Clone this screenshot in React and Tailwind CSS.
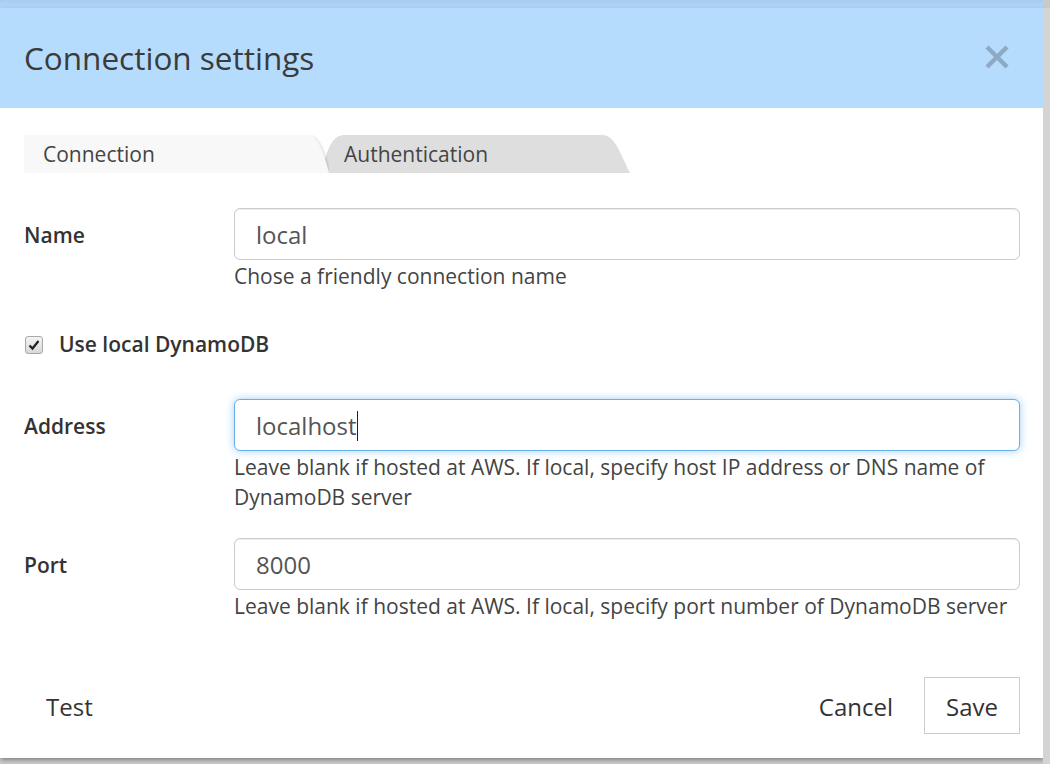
import React from 'react';

const font = { fontFamily: '"Open Sans", "Noto Sans", sans-serif' };

function Tabs() {
  return (
    <div className="flex h-[38px] text-[21px] text-[#444]">
      <div className="relative z-10 w-[305px] h-full">
        <svg className="absolute inset-0" width="305" height="38" viewBox="0 0 305 38">
          <defs>
            <filter id="ts" x="-10%" y="-10%" width="120%" height="120%">
              <feDropShadow dx="1" dy="0" stdDeviation="1.5" floodColor="#000" floodOpacity="0.18" />
            </filter>
          </defs>
          <path d="M0,0 H280 C293,0 297,10 305,38 H0 Z" fill="#f8f8f8" filter="url(#ts)" />
          <rect x="0" y="0" width="290" height="38" fill="#f8f8f8" />
        </svg>
        <span className="relative block pl-[19px] leading-[38px]">Connection</span>
      </div>
      <div className="relative ml-[-12px] w-[313px] h-full">
        <svg className="absolute inset-0" width="313" height="38" viewBox="0 0 313 38">
          <path d="M0,38 C9,34 9,0 27,0 H285 C298,0 303,18 313,38 Z" fill="#dedede" />
        </svg>
        <span className="relative block pl-[27px] leading-[38px]">Authentication</span>
      </div>
    </div>
  );
}

function Field({ label, value, focused, help }) {
  return (
    <div className="flex">
      <div className="w-[210px] h-[52px] flex items-center pt-[3px] text-[21px] font-semibold text-[#333]">{label}</div>
      <div className="flex-1">
        <div
          className={
            focused
              ? 'h-[52px] rounded-[6px] border border-[#66afe9] shadow-[0_0_8px_rgba(102,175,233,0.6)] bg-white flex items-center pt-[2px] pl-[21px] text-[24px] text-[#555]'
              : 'h-[52px] rounded-[6px] border border-[#cccccc] shadow-[inset_0_1px_1px_rgba(0,0,0,0.075)] bg-white flex items-center pt-[2px] pl-[21px] text-[24px] text-[#555]'
          }
        >
          <span>{value}</span>
          {focused && <span className="w-px h-[30px] bg-[#222]" />}
        </div>
        <div className="text-[21px] leading-[30px] text-[#444] mt-[1px]">{help}</div>
      </div>
    </div>
  );
}

export default function App() {
  return (
    <div style={font} className="w-[1050px] h-[764px] bg-[#c9c9c9] overflow-hidden flex flex-col">
      <div className="h-[8px] bg-gradient-to-b from-[#a6cdef] to-[#b0d6f7] w-[1043px]" />
      <div className="flex flex-1">
        <div className="w-[1043px] h-[750px] bg-white shadow-[1px_2px_4px_rgba(0,0,0,0.35)] flex flex-col">
          <div className="h-[100px] bg-[#b6dcfd] flex items-center justify-between pl-[24px] pr-[33px]">
            <h1 className="text-[31.5px] text-[#3b3b3b] leading-none mt-[-1px]">Connection settings</h1>
            <svg width="26" height="26" viewBox="0 0 26 26" className="mt-[-2px]">
              <path d="M3 3 L23 23 M23 3 L3 23" stroke="#8ea9c4" strokeWidth="4.5" strokeLinecap="butt" />
            </svg>
          </div>

          <div className="pl-[24px] pr-[23px] pt-[27px] flex flex-col">
            <Tabs />

            <div className="mt-[35px]">
              <Field label="Name" value="local" help="Chose a friendly connection name" />
            </div>

            <div className="mt-[39px] h-[30px] flex items-center">
              <span className="w-[18px] h-[18px] ml-[1px] rounded-[3px] border border-[#a8a8a8] bg-gradient-to-b from-[#f4f4f4] to-[#d9d9d9] flex items-center justify-center">
                <svg width="12" height="12" viewBox="0 0 12 12">
                  <path d="M1.5 6.5 L4.5 9.5 L10.5 2" stroke="#222" strokeWidth="2.2" fill="none" />
                </svg>
              </span>
              <span className="ml-[16px] text-[21px] font-semibold text-[#333]">Use local DynamoDB</span>
            </div>

            <div className="mt-[39px]">
              <Field
                label="Address"
                value="localhost"
                focused
                help="Leave blank if hosted at AWS. If local, specify host IP address or DNS name of DynamoDB server"
              />
            </div>

            <div className="mt-[26px]">
              <Field
                label="Port"
                value="8000"
                help="Leave blank if hosted at AWS. If local, specify port number of DynamoDB server"
              />
            </div>

            <div className="mt-[56px] flex items-center text-[24px] text-[#333]">
              <button className="ml-[22px] h-[57px] pt-[2px]">Test</button>
              <div className="flex-1" />
              <button className="h-[57px] mr-[31px] pt-[2px]">Cancel</button>
              <button className="h-[57px] w-[96px] pt-[2px] border border-[#cccccc] bg-white">Save</button>
            </div>
          </div>
        </div>
        <div className="flex-1 bg-[#d4d4d4]" />
      </div>
    </div>
  );
}
